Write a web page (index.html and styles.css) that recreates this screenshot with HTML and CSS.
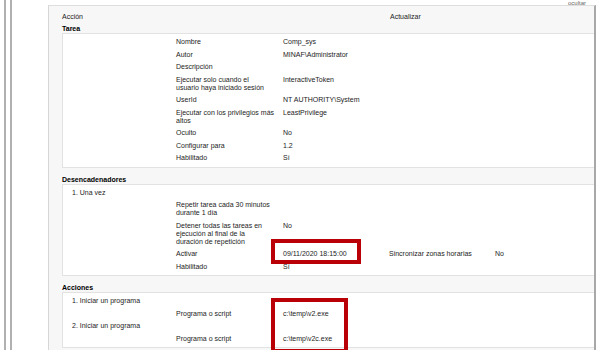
FILE: index.html
```html
<!DOCTYPE html>
<html lang="es">
<head>
  <meta charset="UTF-8">
  <title>Tarea programada - Comp_sys</title>
  <link rel="stylesheet" href="styles.css">
</head>
<body>
  <div class="page">
    <div class="rails"></div>

    <div class="panel">
      <span class="hide-link">ocultar</span>

      <div class="panel-head">
        <span class="col-action">Acción</span>
        <span class="col-refresh">Actualizar</span>
      </div>

      <div class="section-title first">Tarea</div>
      <div class="box">
        <div class="row"><span class="lbl">Nombre</span><span>Comp_sys</span></div>
        <div class="row"><span class="lbl">Autor</span><span>MINAF\Administrator</span></div>
        <div class="row"><span class="lbl">Descripción</span><span></span></div>
        <div class="row"><span class="lbl">Ejecutar solo cuando el<br>usuario haya iniciado sesión</span><span>InteractiveToken</span></div>
        <div class="row"><span class="lbl">UserId</span><span>NT AUTHORITY\System</span></div>
        <div class="row"><span class="lbl">Ejecutar con los privilegios más<br>altos</span><span>LeastPrivilege</span></div>
        <div class="row"><span class="lbl">Oculto</span><span>No</span></div>
        <div class="row"><span class="lbl">Configurar para</span><span>1.2</span></div>
        <div class="row"><span class="lbl">Habilitado</span><span>Sí</span></div>
      </div>

      <div class="section-title">Desencadenadores</div>
      <div class="box">
        <div class="item">1. Una vez</div>
        <div class="row"><span class="lbl">Repetir tarea cada 30 minutos<br>durante 1 día</span><span></span></div>
        <div class="row"><span class="lbl">Detener todas las tareas en<br>ejecución al final de la<br>duración de repetición</span><span>No</span></div>
        <div class="row"><span class="lbl">Activar</span><span>09/11/2020 18:15:00</span><span>Sincronizar zonas horarias</span><span>No</span></div>
        <div class="row"><span class="lbl">Habilitado</span><span>Sí</span></div>
        <div class="mark mark-date"></div>
      </div>

      <div class="section-title">Acciones</div>
      <div class="box">
        <div class="item">1. Iniciar un programa</div>
        <div class="row"><span class="lbl">Programa o script</span><span>c:\temp\v2.exe</span></div>
        <div class="item">2. Iniciar un programa</div>
        <div class="row"><span class="lbl">Programa o script</span><span>c:\temp\v2c.exe</span></div>
        <div class="mark mark-exe"></div>
      </div>
    </div>
  </div>
</body>
</html>
```

FILE: styles.css
```css
body {
  margin: 0;
  font-family: "Liberation Sans", Arial, sans-serif;
  font-size: 7px;
  color: #1c1c1c;
  background-color: #ffffff;
}

.page {
  display: flex;
  align-items: flex-start;
}

.rails {
  flex: none;
  width: 4px;
  height: 350px;
  margin-left: 4px;
  margin-right: 36px;
  border-left: 2px solid #b0b0b0;
  border-right: 2px solid #b0b0b0;
}

.panel {
  position: relative;
  flex: none;
  width: 545px;
  margin-top: 5px;
  padding-bottom: 2px;
  line-height: 8px;
  background-color: #f7f7f7;
  border-top: 1px solid #dedede;
  border-left: 1px solid #d6d6d6;
  border-right: 2px solid #a8a8a8;
}

.hide-link {
  position: absolute;
  top: -6px;
  right: 8px;
  font-size: 6px;
  line-height: 6px;
  color: #666;
}

.panel-head {
  display: flex;
  height: 8px;
  padding: 7px 0 0 13px;
}

.col-action {
  width: 328px;
}

.section-title {
  font-weight: bold;
  color: #000;
  padding: 8px 0 0 13px;
}

.section-title.first {
  padding-top: 4px;
}

.box {
  position: relative;
  margin-left: 13px;
  padding: 2px 0;
  background-color: #ffffff;
  border: 1px solid #e2e2e2;
  border-right: none;
}

.row {
  display: grid;
  grid-template-columns: 113px 107px 106px 106px 1fr;
  padding: 2.25px 0;
}

.row .lbl {
  grid-column: 2;
}

.item {
  padding: 2.25px 0 2.25px 9px;
}

.mark {
  position: absolute;
  box-sizing: border-box;
  border: 4px solid #b80006;
}

.mark-date {
  left: 208px;
  top: 54px;
  width: 90px;
  height: 25px;
}

.mark-exe {
  left: 208px;
  top: 5px;
  width: 77px;
  height: 55px;
}
```
